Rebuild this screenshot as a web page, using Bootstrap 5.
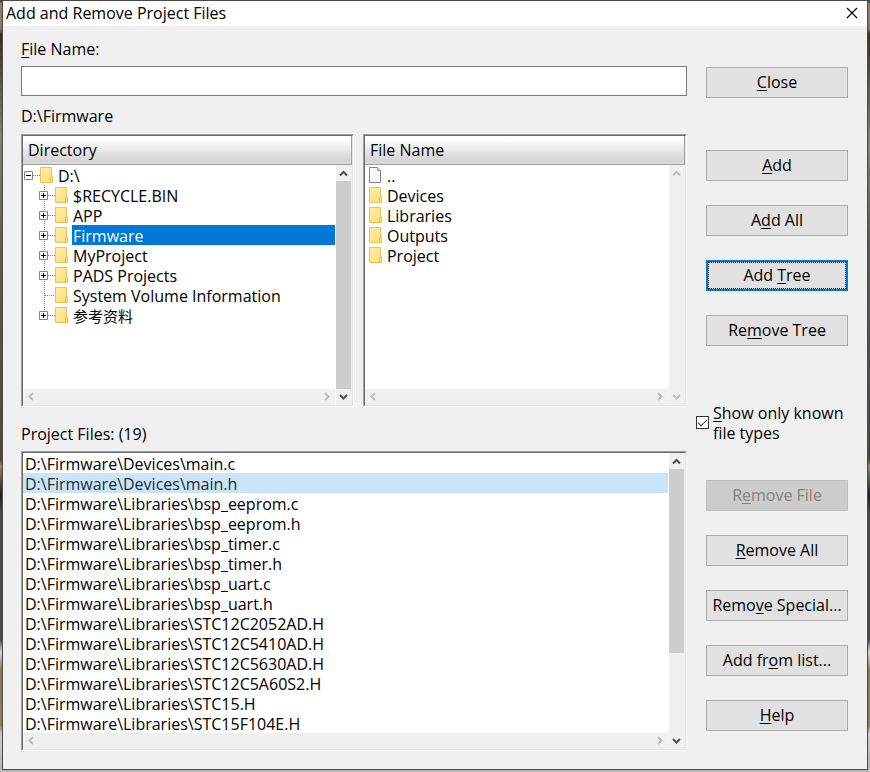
<!DOCTYPE html>
<html lang="en">
<head>
<meta charset="utf-8">
<meta name="viewport" content="width=device-width, initial-scale=1">
<title>Add and Remove Project Files</title>
<link href="https://cdn.jsdelivr.net/npm/bootstrap@5.3.0/dist/css/bootstrap.min.css" rel="stylesheet">
<style>
  body { font-family: "Open Sans", "Noto Sans CJK SC", sans-serif; font-size: 16px; line-height: 20px; color: #000; min-height: 100vh;
    background: linear-gradient(#4a453a 0 2px, #8c8068 3px, #857a63 29px, #35311f 34px, #80817a 140px, #5c5a48 250px, #4a4838 460px, #93876c 466px, #1d1d1d 495px, #4a4a4c 512px, #4a4a4c 640px, #d5d5d5 652px, #857a5c 670px, #8b8061 726px, #c9c9c9 734px, #b5b5b5 100%); }
  .window { margin: 0 3px; min-height: calc(100vh - 4px); background: #f0f0f0; box-shadow: 0 0 0 1px #4c4a45; }
  .desk { padding: 1px 0 3px; }
  .title-row { height: 25px; background: #fff; padding: 2px 0 0 3px; }
  .win-x { width: 30px; height: 20px; border: 0; background: none; }
  .form-area { padding: 13px 19px 18px 18px; }
  .side { width: 142px; padding-top: 28px; margin-left: 19px; }
  .name-field { height: 30px; border: 1px solid #7a7a7a; border-radius: 0; background: #fff; margin-top: 7px; }
  .path-label { padding: 10px 0 8px; }
  .list-label { padding: 17px 0 7px; }
  .sunken { border: 1px solid; border-color: #a0a0a0 #fff #fff #a0a0a0; background: #fff; }
  .sunken-in { border: 1px solid; border-color: #696969 #e3e3e3 #e3e3e3 #696969; min-width: 0; }
  .panes { gap: 9px; }
  .dir-pane { flex: 333 1 0; min-width: 0; }
  .file-pane { flex: 324 1 0; min-width: 0; }
  .pane-head { height: 29px; padding: 4px 5px 0; border: solid #a0a0a0; border-width: 0 1px 1px 0;
    background: linear-gradient(#fff, #fbfbfb 15%, #d4d4d4 90%, #dcdcdc); }
  .rows { list-style: none; margin: 0; padding: 0; line-height: 22px; }
  .rows li { height: 20px; white-space: nowrap; }
  .rows svg { flex: none; }
  .tree .caption { padding-left: 1px; margin-left: 4px; }
  .tree .picked { background: #0078d7; color: #fff; }
  .files li { padding-left: 4px; }
  .files .caption { padding-left: 5px; }
  .cjk { font-size: 15px; }
  .paths li { padding-left: 2px; }
  .paths .picked { background: #cce4f7; color: #1a2b3c; }
  .sb { background: #f0f0f0; }
  .sb button { width: 16px; height: 16px; padding: 0; border: 0; background: none; line-height: 0; color: #505050; }
  .sb button:disabled { color: #bfbfbf; }
  .sb-v { width: 17px; border-left: 1px solid #fff; padding-right: 1px; }
  .sb-v button { width: 15px; }
  .thumb { background: #cdcdcd; }
  .thumb-list { flex: 0 0 184px; }
  .cmd { height: 31px; padding: 0 0 2px; border: 1px solid #adadad; background: #e1e1e1; color: #000; white-space: nowrap; }
  .cmd:disabled { background: #ccc; border-color: #bfbfbf; color: #838383; }
  .cmd-focus { border: 2px solid #0078d7; padding: 0; }
  .cmd-focus > span { display: block; height: 27px; border: 1px dotted #000; line-height: 24px; }
  .side-group { gap: 24px; }
  .group-add { margin-top: 52px; }
  .group-remove { margin-top: 37px; }
  .known { margin: 57px -5px 0 -10px; gap: 4px; }
  .tick { appearance: none; width: 13px; height: 13px; margin: 0 0 1px; border: 1px solid #333; flex: none; background: #fff; display: grid; }
  .tick:checked::before { content: ""; width: 9px; height: 5px; margin: 2px 0 0 1px; border: solid #333; border-width: 0 0 1px 1px; transform: rotate(-45deg); }
  u { text-underline-offset: 2px; text-decoration-thickness: 1px; text-decoration-skip-ink: none; }
</style>
<script src="https://cdn.jsdelivr.net/npm/bootstrap@5.3.0/dist/js/bootstrap.bundle.min.js"></script>
</head>
<body class="desk">
<svg width="0" height="0" class="position-absolute" aria-hidden="true">
  <defs>
    <linearGradient id="gold" x1="0" y1="0" x2="1" y2="1"><stop offset="0" stop-color="#ffeba6"/><stop offset="1" stop-color="#ffdf80"/></linearGradient>
  </defs>
  <symbol id="folder" viewBox="0 0 13 20">
    <path d="M.5 2.500h11v9h1v6H.5z" fill="url(#gold)" stroke="#ebc54b"/>
    <path d="M10.500 17v-4.500l1-1" fill="none" stroke="#e5b93b"/>
  </symbol>
  <symbol id="page" viewBox="0 0 13 20">
    <path d="M.5 2.500h8l3 3v12H.5z" fill="#f7f8fa" stroke="#868686"/>
    <path d="M8.500 2.500v3h3" fill="#ddd" stroke="#999"/>
  </symbol>
  <symbol id="root" viewBox="0 0 17 20">
    <path d="M10 10.500h7" stroke="#808080" stroke-dasharray="1 1"/>
    <path d="M1.500 6.500h8v8h-8z" fill="#fff" stroke="#848484"/>
    <path d="M3 10.500h5" stroke="#000"/>
  </symbol>
  <symbol id="branch" viewBox="0 0 32 20">
    <path d="M21.500 0v20M25 10.500h7" stroke="#808080" stroke-dasharray="1 1"/>
    <path d="M16.500 6.500h8v8h-8z" fill="#fff" stroke="#848484"/>
    <path d="M18 10.500h5M20.500 8v5" stroke="#000"/>
  </symbol>
  <symbol id="leaf" viewBox="0 0 32 20">
    <path d="M21.500 0v20M22 10.500h10" stroke="#808080" stroke-dasharray="1 1"/>
  </symbol>
  <symbol id="last" viewBox="0 0 32 20">
    <path d="M21.500 0v10M25 10.500h7" stroke="#808080" stroke-dasharray="1 1"/>
    <path d="M16.500 6.500h8v8h-8z" fill="#fff" stroke="#848484"/>
    <path d="M18 10.500h5M20.500 8v5" stroke="#000"/>
  </symbol>
  <symbol id="up" viewBox="0 0 15 16"><path d="M4 10.500l3.500-3.500 3.500 3.500" fill="none" stroke="currentColor" stroke-width="2"/></symbol>
  <symbol id="down" viewBox="0 0 15 16"><path d="M4 6l3.500 3.500L11 6" fill="none" stroke="currentColor" stroke-width="2"/></symbol>
  <symbol id="prev" viewBox="0 0 16 16"><path d="M10 4L6.500 7.500 10 11" fill="none" stroke="currentColor" stroke-width="2"/></symbol>
  <symbol id="next" viewBox="0 0 16 16"><path d="M6 4l3.500 3.500L6 11" fill="none" stroke="currentColor" stroke-width="2"/></symbol>
</svg>

<main class="window d-flex flex-column">
  <header class="title-row d-flex justify-content-between">
    <span>Add and Remove Project Files</span>
    <button class="win-x p-0" type="button" aria-label="Close window">
      <svg width="12" height="12" viewBox="0 0 12 12" class="d-block mx-auto"><path d="M1 1l10 10M11 1L1 11" stroke="#000" stroke-width="1.200"/></svg>
    </button>
  </header>

  <form class="form-area d-flex flex-grow-1">
    <div class="d-flex flex-column flex-grow-1">
      <label for="fname"><u>F</u>ile Name:</label>
      <input id="fname" type="text" class="name-field w-100">
      <div class="path-label">D:\Firmware</div>

      <div class="d-flex flex-grow-1 panes">
        <section class="sunken dir-pane d-flex">
          <div class="sunken-in d-flex flex-column flex-grow-1">
            <div class="pane-head">Directory</div>
            <div class="d-flex flex-grow-1">
              <div class="d-flex flex-column flex-grow-1">
                <ul class="rows tree flex-grow-1" role="tree" aria-label="Directory">
                  <li class="d-flex" role="treeitem"><svg width="17" height="20"><use href="#root"/></svg><svg width="13" height="20"><use href="#folder"/></svg><span class="caption">D:\</span></li>
                  <li class="d-flex" role="treeitem"><svg width="32" height="20"><use href="#branch"/></svg><svg width="13" height="20"><use href="#folder"/></svg><span class="caption">$RECYCLE.BIN</span></li>
                  <li class="d-flex" role="treeitem"><svg width="32" height="20"><use href="#branch"/></svg><svg width="13" height="20"><use href="#folder"/></svg><span class="caption">APP</span></li>
                  <li class="d-flex" role="treeitem" aria-selected="true"><svg width="32" height="20"><use href="#branch"/></svg><svg width="13" height="20"><use href="#folder"/></svg><span class="caption picked flex-grow-1">Firmware</span></li>
                  <li class="d-flex" role="treeitem"><svg width="32" height="20"><use href="#branch"/></svg><svg width="13" height="20"><use href="#folder"/></svg><span class="caption">MyProject</span></li>
                  <li class="d-flex" role="treeitem"><svg width="32" height="20"><use href="#branch"/></svg><svg width="13" height="20"><use href="#folder"/></svg><span class="caption">PADS Projects</span></li>
                  <li class="d-flex" role="treeitem"><svg width="32" height="20"><use href="#leaf"/></svg><svg width="13" height="20"><use href="#folder"/></svg><span class="caption">System Volume Information</span></li>
                  <li class="d-flex" role="treeitem"><svg width="32" height="20"><use href="#last"/></svg><svg width="13" height="20"><use href="#folder"/></svg><span class="caption cjk" lang="zh-CN">参考资料</span></li>
                </ul>
                <div class="sb d-flex justify-content-between">
                  <button type="button" disabled aria-label="Scroll left"><svg width="16" height="16"><use href="#prev"/></svg></button>
                  <button type="button" disabled aria-label="Scroll right"><svg width="16" height="16"><use href="#next"/></svg></button>
                </div>
              </div>
              <div class="sb sb-v d-flex flex-column">
                <button type="button" aria-label="Scroll up"><svg width="15" height="16"><use href="#up"/></svg></button>
                <div class="thumb flex-grow-1"></div>
                <button type="button" aria-label="Scroll down"><svg width="15" height="16"><use href="#down"/></svg></button>
              </div>
            </div>
          </div>
        </section>
        <section class="sunken file-pane d-flex">
          <div class="sunken-in d-flex flex-column flex-grow-1">
            <div class="pane-head">File Name</div>
            <div class="d-flex flex-grow-1">
              <div class="d-flex flex-column flex-grow-1">
                <ul class="rows files flex-grow-1" aria-label="File Name">
                  <li class="d-flex"><svg width="13" height="20"><use href="#page"/></svg><span class="caption">..</span></li>
                  <li class="d-flex"><svg width="13" height="20"><use href="#folder"/></svg><span class="caption">Devices</span></li>
                  <li class="d-flex"><svg width="13" height="20"><use href="#folder"/></svg><span class="caption">Libraries</span></li>
                  <li class="d-flex"><svg width="13" height="20"><use href="#folder"/></svg><span class="caption">Outputs</span></li>
                  <li class="d-flex"><svg width="13" height="20"><use href="#folder"/></svg><span class="caption">Project</span></li>
                </ul>
                <div class="sb d-flex justify-content-between">
                  <button type="button" disabled aria-label="Scroll left"><svg width="16" height="16"><use href="#prev"/></svg></button>
                  <button type="button" disabled aria-label="Scroll right"><svg width="16" height="16"><use href="#next"/></svg></button>
                </div>
              </div>
              <div class="sb sb-v d-flex flex-column justify-content-between">
                <button type="button" disabled aria-label="Scroll up"><svg width="15" height="16"><use href="#up"/></svg></button>
                <button type="button" disabled aria-label="Scroll down"><svg width="15" height="16"><use href="#down"/></svg></button>
              </div>
            </div>
          </div>
        </section>
      </div>

      <div class="list-label">Project Files: (19)</div>
      <section class="sunken">
        <div class="sunken-in d-flex">
          <div class="flex-grow-1">
            <ul class="rows paths" role="listbox" aria-label="Project Files">
              <li role="option">D:\Firmware\Devices\main.c</li>
              <li role="option" class="picked" aria-selected="true">D:\Firmware\Devices\main.h</li>
              <li role="option">D:\Firmware\Libraries\bsp_eeprom.c</li>
              <li role="option">D:\Firmware\Libraries\bsp_eeprom.h</li>
              <li role="option">D:\Firmware\Libraries\bsp_timer.c</li>
              <li role="option">D:\Firmware\Libraries\bsp_timer.h</li>
              <li role="option">D:\Firmware\Libraries\bsp_uart.c</li>
              <li role="option">D:\Firmware\Libraries\bsp_uart.h</li>
              <li role="option">D:\Firmware\Libraries\STC12C2052AD.H</li>
              <li role="option">D:\Firmware\Libraries\STC12C5410AD.H</li>
              <li role="option">D:\Firmware\Libraries\STC12C5630AD.H</li>
              <li role="option">D:\Firmware\Libraries\STC12C5A60S2.H</li>
              <li role="option">D:\Firmware\Libraries\STC15.H</li>
              <li role="option">D:\Firmware\Libraries\STC15F104E.H</li>
            </ul>
            <div class="sb d-flex justify-content-between">
              <button type="button" disabled aria-label="Scroll left"><svg width="16" height="16"><use href="#prev"/></svg></button>
              <button type="button" disabled aria-label="Scroll right"><svg width="16" height="16"><use href="#next"/></svg></button>
            </div>
          </div>
          <div class="sb sb-v d-flex flex-column">
            <button type="button" aria-label="Scroll up"><svg width="15" height="16"><use href="#up"/></svg></button>
            <div class="thumb thumb-list"></div>
            <button type="button" class="mt-auto" aria-label="Scroll down"><svg width="15" height="16"><use href="#down"/></svg></button>
          </div>
        </div>
      </section>
    </div>

    <div class="side d-flex flex-column flex-shrink-0">
      <button type="button" class="cmd"><u>C</u>lose</button>
      <div class="side-group group-add d-flex flex-column">
        <button type="button" class="cmd"><u>A</u>dd</button>
        <button type="button" class="cmd">A<u>d</u>d All</button>
        <button type="button" class="cmd cmd-focus"><span>Add <u>T</u>ree</span></button>
        <button type="button" class="cmd">Re<u>m</u>ove Tree</button>
      </div>
      <div class="known d-flex align-items-center">
        <input class="tick" type="checkbox" id="known" checked>
        <label for="known"><u>S</u>how only known<br>file types</label>
      </div>
      <div class="side-group group-remove d-flex flex-column">
        <button type="button" class="cmd" disabled>R<u>e</u>move File</button>
        <button type="button" class="cmd"><u>R</u>emove All</button>
        <button type="button" class="cmd">Remo<u>v</u>e Special...</button>
        <button type="button" class="cmd">Add fr<u>o</u>m list...</button>
        <button type="button" class="cmd"><u>H</u>elp</button>
      </div>
    </div>
  </form>
</main>
</body>
</html>
